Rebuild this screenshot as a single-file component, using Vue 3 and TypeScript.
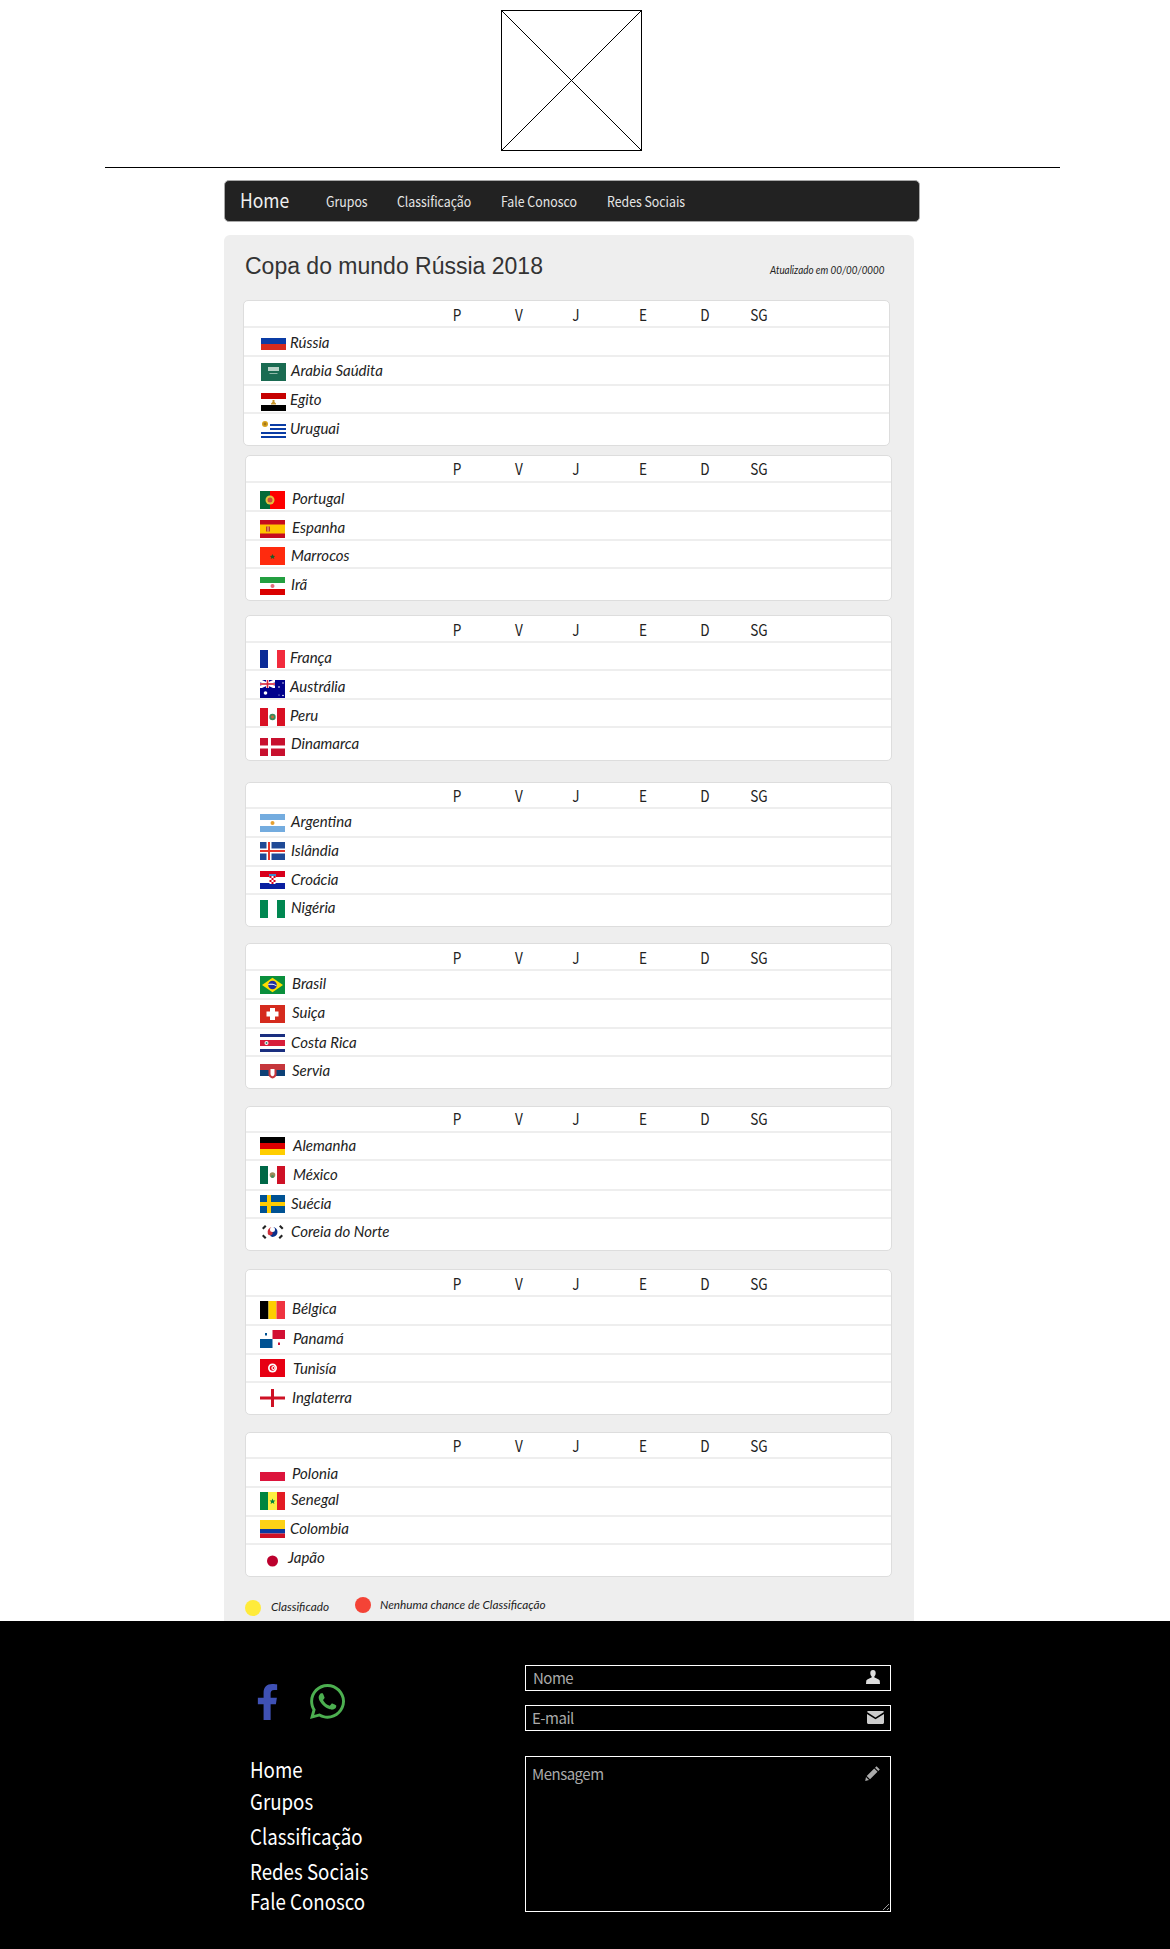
<template>
  <div class="page">
    <!-- logo placeholder -->
    <div class="logo-wrap">
      <svg class="logo" viewBox="0 0 141 141" width="141" height="141">
        <rect x="0.5" y="0.5" width="140" height="140" fill="#fff" stroke="#000" />
        <path d="M0.5 0.500L140.500 140.500M140.500 0.500L0.500 140.500" stroke="#000" stroke-width="1" fill="none" />
      </svg>
    </div>
    <hr class="rule" />

    <nav class="navbar">
      <a class="brand">Home</a>
      <a v-for="n in navLinks" :key="n.label" class="nav-link" :style="{ left: n.x + 'px' }">{{ n.label }}</a>
    </nav>

    <main class="panel">
      <header class="panel-head">
        <h1>Copa do mundo Rússia 2018</h1>
        <span class="updated">Atualizado em 00/00/0000</span>
      </header>

      <section
        v-for="(g, gi) in groups"
        :key="gi"
        class="card"
        :style="{ marginTop: g.gap + 'px', marginLeft: g.x - 224 + 'px', width: g.w + 'px' }"
      >
        <div class="card-head" :style="{ height: g.headH + 'px' }">
          <span
            v-for="c in columns"
            :key="c.label"
            class="col"
            :style="{ left: c.x - g.x - 1 + 'px', top: g.headY - 13 + 'px' }"
          >{{ c.label }}</span>
        </div>
        <div
          v-for="r in g.rows"
          :key="r.name"
          class="row"
          :style="{ height: r.h + 'px' }"
        >
          <svg
            class="flag"
            viewBox="0 0 25 18"
            width="25"
            height="18"
            :style="{ marginLeft: g.flagX - g.x - 1 + 'px', marginTop: r.fy - 1 + 'px' }"
          >
            <component :is="s.tag" v-for="(s, si) in flags[r.flag]" :key="si" v-bind="s.attrs" />
          </svg>
          <span class="name" :style="{ marginLeft: r.nx - g.flagX - 25 + 'px', marginTop: r.ny - 13 + 'px' }">{{ r.name }}</span>
        </div>
      </section>

      <div class="legend">
        <span class="dot yellow"></span>
        <span class="legend-text first">Classificado</span>
        <span class="dot red"></span>
        <span class="legend-text second">Nenhuma chance de Classificação</span>
      </div>
    </main>

    <footer class="footer">
      <div class="foot-left">
        <div class="social">
          <svg class="fb" viewBox="0 0 320 512" width="23" height="36">
            <path fill="#3f51b5" d="M279.14 288l14.22-92.66h-88.91v-60.13c0-25.35 12.42-50.06 52.24-50.06h40.42V6.26S260.43 0 225.36 0c-73.22 0-121.08 44.38-121.08 124.72v70.62H22.89V288h81.39v224h100.17V288z" />
          </svg>
          <svg class="wa" viewBox="0 32 448 448" width="35" height="35">
            <path fill="#4caf50" d="M380.9 97.1C339 55.1 283.2 32 223.9 32c-122.4 0-222 99.6-222 222 0 39.1 10.2 77.3 29.6 111L0 480l117.7-30.9c32.4 17.7 68.9 27 106.1 27h.1c122.3 0 224.1-99.6 224.1-222 0-59.3-25.2-115-67.1-157zm-157 341.6c-33.2 0-65.7-8.9-94-25.7l-6.7-4-69.8 18.3L72 359.2l-4.4-7c-18.5-29.4-28.2-63.3-28.2-98.2 0-101.7 82.8-184.5 184.6-184.5 49.3 0 95.6 19.2 130.4 54.1 34.8 34.9 56.2 81.2 56.1 130.5 0 101.8-84.9 184.6-186.6 184.6zm101.2-138.2c-5.5-2.8-32.8-16.2-37.9-18-5.1-1.9-8.8-2.8-12.5 2.8-3.7 5.6-14.3 18-17.6 21.8-3.2 3.7-6.5 4.2-12 1.4-32.6-16.3-54-29.1-75.5-66-5.7-9.8 5.7-9.1 16.3-30.3 1.8-3.7.9-6.9-.5-9.7-1.4-2.8-12.5-30.1-17.1-41.2-4.5-10.8-9.1-9.3-12.5-9.5-3.2-.2-6.9-.2-10.6-.2-3.7 0-9.7 1.4-14.8 6.9-5.1 5.6-19.4 19-19.4 46.3 0 27.3 19.9 53.7 22.6 57.4 2.8 3.7 39.1 59.7 94.8 83.8 35.2 15.2 49 16.5 66.6 13.9 10.7-1.6 32.8-13.4 37.4-26.4 4.6-13 4.6-24.1 3.2-26.4-1.3-2.5-5-3.9-10.5-6.6z" />
          </svg>
        </div>
        <ul class="foot-links">
          <li v-for="l in footLinks" :key="l.label" :style="{ marginTop: l.gap + 'px' }">{{ l.label }}</li>
        </ul>
      </div>

      <form class="contact" @submit.prevent>
        <div class="field">
          <input class="nome" type="text" placeholder="Nome" />
          <svg class="ico user" viewBox="0 0 14 14" width="14" height="14">
            <path fill="#ddd" d="M7 0C5.2 0 4.3 1.3 4.3 3c0 1.4.5 2.6 1.3 3.3v1.2C4.2 8.300 1.200 9.200.300 10.500L0 14h14l-.3-3.500c-.9-1.300-3.900-2.200-5.300-3V6.300c.8-.7 1.300-1.900 1.300-3.300C9.700 1.300 8.800 0 7 0z" />
          </svg>
        </div>
        <div class="field mail">
          <input type="text" placeholder="E-mail" />
          <svg class="ico env" viewBox="0 0 17 13" width="17" height="13">
            <path fill="#ccc" d="M1.500 0h14c.7 0 1.300.5 1.500 1.100L8.500 6.500 0 1.100C.2.500.8 0 1.500 0z" />
            <path fill="#ccc" d="M0 3l8.500 5.300L17 3v8.500c0 .8-.7 1.500-1.500 1.500h-14C.7 13 0 12.300 0 11.500z" />
          </svg>
        </div>
        <div class="field msg">
          <textarea placeholder="Mensagem"></textarea>
          <svg class="ico pen" viewBox="0 0 15 15" width="15" height="15">
            <path fill="#aaa" d="M11.500.2l3.300 3.300-1.500 1.500-3.300-3.300zM9.200 2.500l3.300 3.300-7.500 7.500-3.300-3.300zM1 11l3 3-3.800.9z" />
          </svg>
        </div>
      </form>
    </footer>
  </div>
</template>

<script setup lang="ts">
type Shape = { tag: string; attrs: Record<string, string | number> };

const r = (x: number, y: number, width: number, height: number, fill: string): Shape => ({
  tag: 'rect',
  attrs: { x, y, width, height, fill },
});
const c = (cx: number, cy: number, rad: number, fill: string): Shape => ({
  tag: 'circle',
  attrs: { cx, cy, r: rad, fill },
});
const p = (d: string, fill: string): Shape => ({ tag: 'path', attrs: { d, fill } });

const flags: Record<string, Shape[]> = {
  ru: [r(0, 6, 25, 6, '#0a3ca5'), r(0, 12, 25, 6, '#d52b1e')],
  sa: [r(0, 0, 25, 18, '#1a6b52'), r(7, 4, 11, 4, '#b9d3c8'), r(8.500, 10, 8, 1, '#8fb8a8')],
  eg: [
    r(0, 0, 25, 6, '#c60000'),
    r(0, 6, 25, 6, '#fff'),
    r(0, 12, 25, 6, '#000'),
    p('M11.500 7h2v2l1.500 1.500v1h-5v-1l1.500-1.500z', '#c9962a'),
  ],
  uy: [
    r(9, 4, 16, 2, '#0a3ca5'),
    r(9, 8, 16, 2, '#0a3ca5'),
    r(0, 12, 25, 2, '#0a3ca5'),
    r(0, 16, 25, 2, '#0a3ca5'),
    c(4, 4, 3, '#d7a21c'),
    c(4, 4, 1.400, '#a4761a'),
  ],
  pt: [r(0, 0, 25, 18, '#fe0000'), r(0, 0, 10, 18, '#046a38'), c(10, 9, 4.500, '#e3c13c'), c(10, 9, 2.500, '#c8503c')],
  es: [
    r(0, 0, 25, 18, '#c60b1e'),
    r(0, 4.500, 25, 9, '#ffc400'),
    r(6, 6.500, 4, 5, '#c0392b'),
    r(7.500, 6.500, 1, 5, '#e8c38a'),
  ],
  ma: [r(0, 0, 25, 18, '#ff2b0e'), p('M12.500 7l.8 1.800 1.800.2-1.300 1.200.5 1.800-1.800-1-1.800 1 .5-1.800-1.300-1.200 1.800-.2z', '#1d5a26')],
  ir: [
    r(0, 0, 25, 6, '#239f40'),
    r(0, 6, 25, 6, '#fff'),
    r(0, 12, 25, 6, '#da0000'),
    c(12.500, 9, 2, '#e26d7a'),
  ],
  fr: [r(0, 0, 8, 18, '#0a2a96'), r(8, 0, 9, 18, '#fff'), r(17, 0, 8, 18, '#f22b3d')],
  au: [
    r(0, 0, 25, 18, '#00008b'),
    p('M0 0h2l13 6v2h-2L0 2z', '#fff'),
    p('M15 0h-2L0 6v2h2l13-6z', '#fff'),
    r(6, 0, 3, 8, '#fff'),
    r(0, 2.500, 15, 3, '#fff'),
    r(6.700, 0, 1.600, 8, '#d8223c'),
    r(0, 3.200, 15, 1.600, '#d8223c'),
    c(5.500, 13, 1.800, '#fff'),
    c(19, 7, 0.800, '#fff'),
    c(23, 3, 0.700, '#fff'),
    c(23, 15.500, 0.800, '#fff'),
    c(19, 15, 0.500, '#fff'),
  ],
  pe: [
    r(0, 0, 8, 18, '#d91023'),
    r(8, 0, 9, 18, '#fff'),
    r(17, 0, 8, 18, '#d91023'),
    c(12.500, 9, 3.200, '#3b8a5a'),
    c(12.500, 9, 1.400, '#c96a3a'),
  ],
  dk: [r(0, 0, 25, 18, '#c8102e'), r(8, 0, 3, 18, '#fff'), r(0, 7.500, 25, 3, '#fff')],
  ar: [r(0, 0, 25, 6, '#74acdf'), r(0, 6, 25, 6, '#fff'), r(0, 12, 25, 6, '#74acdf'), c(12.500, 9, 2, '#e6a030')],
  is: [
    r(0, 0, 25, 18, '#1f4a96'),
    r(6.500, 0, 5, 18, '#fff'),
    r(0, 6.500, 25, 5, '#fff'),
    r(8, 0, 2, 18, '#e8352a'),
    r(0, 8, 25, 2, '#e8352a'),
  ],
  hr: [
    r(0, 0, 25, 6, '#d8001c'),
    r(0, 6, 25, 6, '#fff'),
    r(0, 12, 25, 6, '#0a1fa0'),
    r(9, 3, 7, 2, '#3d8ed0'),
    r(9.500, 5, 6, 8, '#fff'),
    r(9.500, 5, 2, 2, '#d8001c'),
    r(13.500, 5, 2, 2, '#d8001c'),
    r(11.500, 7, 2, 2, '#d8001c'),
    r(9.500, 9, 2, 2, '#d8001c'),
    r(13.500, 9, 2, 2, '#d8001c'),
    r(11.500, 11, 2, 2, '#d8001c'),
  ],
  ng: [r(0, 0, 8, 18, '#008751'), r(17, 0, 8, 18, '#008751')],
  br: [
    r(0, 0, 25, 18, '#0a8f3c'),
    p('M12.500 1.800L23 9 12.500 16.200 2 9z', '#fedd00'),
    c(12.500, 9, 4.300, '#1f2fa0'),
    p('M8.400 8c3-.6 6-.2 8.200 1.500l-.2.800C14 8.800 11.300 8.500 8.300 9z', '#fff'),
  ],
  ch: [r(0, 0, 25, 18, '#d52b1e'), r(10, 3, 5, 12, '#fff'), r(6.500, 6.500, 12, 5, '#fff')],
  cr: [
    r(0, 0, 25, 3, '#1a2f80'),
    r(0, 6, 25, 6, '#d81e3a'),
    r(0, 15, 25, 3, '#1a2f80'),
    c(6.500, 9, 2, '#fff'),
    c(6.500, 9, 1, '#2a8a70'),
  ],
  rs: [
    r(0, 0, 25, 6, '#c6363c'),
    r(0, 6, 25, 6, '#0c4076'),
    p('M8.500 3h8v7.500c0 2-2 3.500-4 4-2-.5-4-2-4-4z', '#c6363c'),
    p('M10.500 5h4v5c0 1-1 2-2 2.300-1-.3-2-1.300-2-2.300z', '#fff'),
  ],
  de: [r(0, 0, 25, 6, '#000'), r(0, 6, 25, 6, '#dd0000'), r(0, 12, 25, 6, '#ffce00')],
  mx: [
    r(0, 0, 8, 18, '#006847'),
    r(8, 0, 9, 18, '#fff'),
    r(17, 0, 8, 18, '#ce1126'),
    c(12.500, 9, 2.800, '#9a8a5a'),
    c(12.500, 10.500, 1.500, '#4a8a5a'),
  ],
  se: [r(0, 0, 25, 18, '#005293'), r(7, 0, 4, 18, '#fecb00'), r(0, 7, 25, 4, '#fecb00')],
  kr: [
    p('M12.500 4a5 5 0 0 1 0 10 2.500 2.500 0 0 1 0-5 2.500 2.500 0 0 0 0-5z', '#0a2f8a'),
    p('M12.500 4a5 5 0 0 0-4.700 6.700A2.500 2.500 0 0 0 12.500 9a2.500 2.500 0 0 1 0-5z', '#cd2e3a'),
    p('M2 5l3-3 1.500 1.500-3 3zM19 3.500l1.500-1.500 3 3-1.500 1.500zM2 13l1.500-1.500 3 3L5 16zM18.500 14.500l3-3 1.500 1.500-3 3z', '#222'),
  ],
  be: [r(0, 0, 8.500, 18, '#000'), r(8.500, 0, 8, 18, '#fdcf00'), r(16.500, 0, 8.500, 18, '#ef3340')],
  pa: [
    r(12.500, 0, 12.500, 9, '#d21034'),
    r(0, 9, 12.500, 9, '#005293'),
    r(5, 3, 2, 2.500, '#005293'),
    r(18, 12.500, 2, 2.500, '#d21034'),
  ],
  tn: [r(0, 0, 25, 18, '#e70013'), c(12.500, 9, 4.500, '#fff'), c(12.500, 9, 2.800, '#e70013'), c(13.300, 9, 2, '#fff'), c(13.500, 9, 0.900, '#e70013')],
  en: [r(11, 0, 3, 18, '#ce1124'), r(0, 7.500, 25, 3, '#ce1124')],
  pl: [r(0, 9, 25, 9, '#dc143c')],
  sn: [
    r(0, 0, 8, 18, '#00853f'),
    r(8, 0, 9, 18, '#fdef42'),
    r(17, 0, 8, 18, '#e31b23'),
    p('M12.500 6.500l.8 2 2.100.100-1.600 1.300.6 2-1.900-1.100-1.900 1.100.6-2-1.600-1.300 2.100-.100z', '#00853f'),
  ],
  co: [r(0, 0, 25, 9, '#fcd116'), r(0, 9, 25, 4.500, '#0a38a0'), r(0, 13.500, 25, 4.500, '#ce1126')],
  jp: [c(12.500, 9, 5.500, '#bc002d')],
};

type Row = { name: string; flag: string; h: number; fy: number; ny: number; nx: number };
const row = (name: string, flag: string, h: number, fy: number, ny: number, nx: number): Row => ({
  name,
  flag,
  h,
  fy,
  ny,
  nx,
});

const navLinks = [
  { label: 'Grupos', x: 101 },
  { label: 'Classificação', x: 172 },
  { label: 'Fale Conosco', x: 276 },
  { label: 'Redes Sociais', x: 382 },
];

const columns = [
  { label: 'P', x: 457 },
  { label: 'V', x: 519 },
  { label: 'J', x: 576 },
  { label: 'E', x: 643 },
  { label: 'D', x: 705 },
  { label: 'SG', x: 759 },
];

const groups = [
  {
    gap: 0, x: 243, w: 647, flagX: 261, headH: 25, headY: 14,
    rows: [
      row('Rússia', 'ru', 29, 5, 15, 290),
      row('Arabia Saúdita', 'sa', 29, 7, 14, 291),
      row('Egito', 'eg', 28, 8, 14, 290),
      row('Uruguai', 'uy', 33, 7, 15, 290),
    ],
  },
  {
    gap: 9, x: 245, w: 647, flagX: 260, headH: 25, headY: 13,
    rows: [
      row('Portugal', 'pt', 29, 9, 16, 292),
      row('Espanha', 'es', 29, 9, 16, 292),
      row('Marrocos', 'ma', 28, 7, 15, 291),
      row('Irã', 'ir', 33, 9, 16, 291),
    ],
  },
  {
    gap: 14, x: 245, w: 647, flagX: 260, headH: 25, headY: 14,
    rows: [
      row('França', 'fr', 28, 8, 15, 290),
      row('Austrália', 'au', 29, 10, 16, 290),
      row('Peru', 'pe', 28, 9, 16, 290),
      row('Dinamarca', 'dk', 34, 11, 16, 291),
    ],
  },
  {
    gap: 21, x: 245, w: 647, flagX: 260, headH: 24, headY: 13,
    rows: [
      row('Argentina', 'ar', 29, 6, 13, 291),
      row('Islândia', 'is', 29, 5, 13, 291),
      row('Croácia', 'hr', 28, 5, 13, 291),
      row('Nigéria', 'ng', 33, 6, 13, 291),
    ],
  },
  {
    gap: 16, x: 245, w: 647, flagX: 260, headH: 25, headY: 14,
    rows: [
      row('Brasil', 'br', 29, 6, 13, 292),
      row('Suiça', 'ch', 29, 6, 13, 292),
      row('Costa Rica', 'cr', 28, 6, 14, 291),
      row('Servia', 'rs', 33, 8, 14, 292),
    ],
  },
  {
    gap: 17, x: 245, w: 647, flagX: 260, headH: 24, headY: 12,
    rows: [
      row('Alemanha', 'de', 28, 5, 13, 293),
      row('México', 'mx', 30, 6, 14, 293),
      row('Suécia', 'se', 28, 5, 13, 291),
      row('Coreia do Norte', 'kr', 33, 5, 13, 291),
    ],
  },
  {
    gap: 18, x: 245, w: 647, flagX: 260, headH: 25, headY: 14,
    rows: [
      row('Bélgica', 'be', 29, 5, 12, 292),
      row('Panamá', 'pa', 29, 5, 13, 293),
      row('Tunisía', 'tn', 28, 5, 14, 293),
      row('Inglaterra', 'en', 33, 7, 15, 292),
    ],
  },
  {
    gap: 17, x: 245, w: 647, flagX: 260, headH: 24, headY: 13,
    rows: [
      row('Polonia', 'pl', 29, 5, 15, 292),
      row('Senegal', 'sn', 29, 5, 12, 291),
      row('Colombia', 'co', 28, 4, 12, 290),
      row('Japão', 'jp', 33, 8, 13, 288),
    ],
  },
];

const footLinks = [
  { label: 'Home', gap: 0 },
  { label: 'Grupos', gap: 2 },
  { label: 'Classificação', gap: 5 },
  { label: 'Redes Sociais', gap: 5 },
  { label: 'Fale Conosco', gap: 0 },
];
</script>

<style scoped>
.page {
  width: 1170px;
  height: 1949px;
  overflow: hidden;
  background: #fff;
  font-family: "Noto Sans CJK SC", "Noto Sans", sans-serif;
}
.logo-wrap { padding: 10px 0 0 501px; height: 141px; }
.logo { display: block; }
.rule {
  margin: 16px 0 0 105px;
  width: 955px;
  border: 0;
  border-top: 1px solid #000;
  height: 0;
}
.navbar {
  position: relative;
  box-sizing: border-box;
  margin: 12px 0 0 224px;
  width: 696px;
  height: 42px;
  background: #222;
  border: 1px solid #a9a9a9;
  border-radius: 5px;
}
.brand {
  position: absolute;
  left: 15px;
  top: 4px;
  font-size: 20px;
  line-height: 30px;
  color: #f0f0f0;
  transform: scaleX(0.875);
  transform-origin: left;
}
.nav-link {
  position: absolute;
  top: 8px;
  font-size: 14px;
  line-height: 24px;
  color: #e6e6e6;
  white-space: nowrap;
  transform: scaleX(0.88);
  transform-origin: left;
}
.panel {
  box-sizing: border-box;
  margin: 13px 0 0 224px;
  width: 690px;
  height: 1386px;
  background: #eee;
  border-radius: 6px 6px 0 0;
}
.panel-head { position: relative; height: 65px; }
.panel-head h1 {
  margin: 0;
  padding: 15px 0 0 21px;
  font-family: "Liberation Sans", Arial, sans-serif;
  font-weight: 400;
  font-size: 23px;
  line-height: 32px;
  color: #333;
}
.updated {
  position: absolute;
  left: 546px;
  top: 26px;
  font-family: Lato, sans-serif;
  font-size: 12px;
  line-height: 18px;
  font-style: italic;
  color: #222;
  white-space: nowrap;
  transform: scaleX(0.82);
  transform-origin: left;
}
.card {
  box-sizing: border-box;
  background: #fff;
  border: 1px solid #ddd;
  border-radius: 5px;
}
.card-head { position: relative; }
.col {
  position: absolute;
  transform: translateX(-50%) scaleX(0.85);
  font-size: 16px;
  line-height: 24px;
  color: #222;
}
.row {
  display: flex;
  align-items: flex-start;
  box-sizing: border-box;
  border-top: 2px solid #eee;
}
.flag { display: block; flex: none; }
.name {
  font-family: Lato, sans-serif;
  font-size: 15px;
  line-height: 24px;
  font-style: italic;
  color: #222;
  white-space: nowrap;
}
.legend { position: relative; height: 44px; }
.dot {
  position: absolute;
  width: 16px;
  height: 16px;
  border-radius: 50%;
}
.yellow { left: 21px; top: 23px; background: #ffeb3b; }
.red { left: 131px; top: 20px; background: #f44336; }
.legend-text {
  position: absolute;
  font-family: Lato, sans-serif;
  font-size: 12px;
  line-height: 18px;
  font-style: italic;
  color: #222;
  white-space: nowrap;
  transform: scaleX(0.98);
  transform-origin: left;
}
.first { left: 47px; top: 21px; }
.second { left: 156px; top: 19px; }
.footer {
  display: flex;
  height: 328px;
  background: #000;
}
.foot-left { width: 525px; box-sizing: border-box; padding: 63px 0 0 250px; }
.social { display: flex; align-items: flex-start; gap: 31px; padding-left: 6px; }
.foot-links { list-style: none; margin: 33px 0 0; padding: 0; }
.foot-links li {
  font-size: 22px;
  line-height: 30px;
  color: #fff;
  transform: scaleX(0.85);
  transform-origin: left;
}
.contact { width: 366px; padding-top: 44px; }
.field { position: relative; }
.mail { margin-top: 14px; }
.msg { margin-top: 25px; }
input, textarea {
  display: block;
  box-sizing: border-box;
  width: 366px;
  height: 26px;
  margin: 0;
  padding: 0 6px 2px;
  background: #000;
  border: 1px solid #fff;
  border-radius: 0;
  outline: 0;
  color: #fff;
  font-family: "Noto Sans CJK SC", "Noto Sans", sans-serif;
  font-size: 15px;
  letter-spacing: -0.5px;
}
.nome { padding-left: 7px; }
textarea {
  height: 156px;
  padding: 6px 6px;
  line-height: 22px;
}
input::placeholder, textarea::placeholder { color: #aaa; opacity: 1; }
.ico { position: absolute; }
.user { left: 341px; top: 5px; }
.env { left: 342px; top: 6px; }
.pen { left: 340px; top: 10px; }
</style>

<style>
html, body { margin: 0; background: #fff; }
</style>
